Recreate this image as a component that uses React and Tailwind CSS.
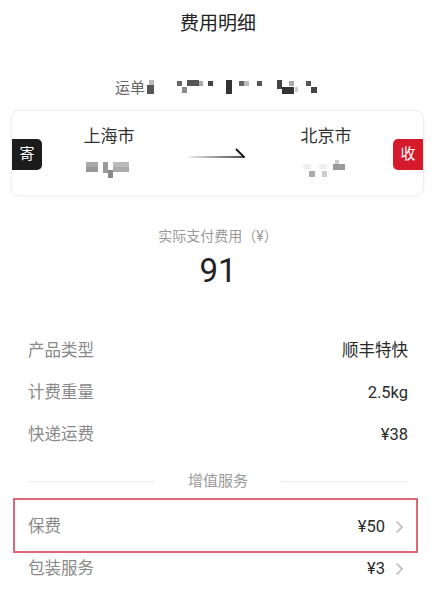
import React from "react";

const font = "font-['Roboto','Noto_Sans_CJK_SC',sans-serif]";

const waybillBlocks = [
  [2, 7, 7, 9, "#555"],
  [4, 2, 5, 5, "#bbb"],
  [32, 3, 5, 5, "#666"],
  [37, 9, 5, 6, "#888"],
  [42, 2, 12, 6, "#555"],
  [54, 3, 4, 5, "#aaa"],
  [63, 3, 5, 5, "#444"],
  [81, 2, 6, 14, "#333"],
  [94, 3, 5, 5, "#666"],
  [99, 3, 5, 5, "#bbb"],
  [112, 3, 5, 5, "#555"],
  [132, 2, 5, 9, "#444"],
  [137, 9, 12, 7, "#333"],
  [144, 3, 5, 5, "#aaa"],
  [150, 9, 3, 5, "#ccc"],
  [161, 3, 5, 5, "#555"],
  [166, 9, 6, 6, "#444"],
];

const Mosaic = ({ blocks, width, height }) => (
  <svg width={width} height={height} viewBox={`0 0 ${width} ${height}`}>
    {blocks.map(([x, y, w, h, c], i) => (
      <rect key={i} x={x} y={y} width={w} height={h} fill={c} />
    ))}
  </svg>
);

const Chevron = () => (
  <svg width="9" height="14" viewBox="0 0 9 14" className="ml-[10px]">
    <polyline
      points="1.5,1.5 7,7 1.5,12.5"
      fill="none"
      stroke="#b8b8b8"
      strokeWidth="1.5"
    />
  </svg>
);

const Row = ({ label, value, arrow }) => (
  <div className="h-[42px] flex items-center justify-between px-[28px]">
    <span className="text-[16.5px] text-[#8a8a8a]">{label}</span>
    <span className={`flex items-center text-[16.5px] text-[#2a2a2a] ${arrow ? "mr-[4px]" : ""}`}>
      {value}
      {arrow && <Chevron />}
    </span>
  </div>
);

export default function App() {
  return (
    <div className={`w-[436px] h-[600px] bg-white overflow-hidden ${font}`}>
      {/* header */}
      <div className="h-[48px] flex items-center justify-center text-[19px] text-[#222]">
        费用明细
      </div>

      {/* waybill */}
      <div className="mt-[30px] h-[20px] flex items-center justify-center">
        <span className="text-[15px] text-[#666] leading-none">运单</span>
        <Mosaic blocks={waybillBlocks} width={176} height={20} />
      </div>

      {/* route card */}
      <div className="mt-[12px] ml-[11px] mr-[12px] h-[86px] rounded-[8px] border border-[#eeeeee] shadow-[0_1px_4px_rgba(0,0,0,0.04)] flex items-center">
        <div className="w-[30px] h-[31px] mt-[3px] bg-[#1c1c1c] rounded-r-[5px] flex items-center justify-center text-white text-[15px]">
          寄
        </div>
        <div className="flex-1 flex items-start justify-between px-[32px] pt-[2px] pb-[6px]">
          <div className="w-[70px] flex flex-col items-center">
            <span className="text-[17px] leading-[24px] text-[#333]">上海市</span>
            <div className="mt-[12px]">
              <Mosaic
                width={46}
                height={18}
                blocks={[
                  [0, 2, 12, 5, "#aaa"],
                  [0, 7, 12, 5, "#999"],
                  [17, 2, 5, 11, "#999"],
                  [22, 10, 5, 8, "#888"],
                  [27, 2, 16, 5, "#bbb"],
                  [27, 7, 16, 5, "#aaa"],
                ]}
              />
            </div>
          </div>
          <div className="self-center mt-[6px]">
            <svg width="58" height="14" viewBox="0 0 58 14">
              <defs>
                <linearGradient
                  id="arrowGrad"
                  gradientUnits="userSpaceOnUse"
                  x1="0"
                  y1="10"
                  x2="56"
                  y2="10"
                >
                  <stop offset="0" stopColor="#000" stopOpacity="0.1" />
                  <stop offset="0.5" stopColor="#000" stopOpacity="0.55" />
                  <stop offset="1" stopColor="#111" stopOpacity="1" />
                </linearGradient>
              </defs>
              <line x1="0" y1="10" x2="56" y2="10" stroke="url(#arrowGrad)" strokeWidth="1.6" />
              <line x1="55" y1="10" x2="47" y2="2" stroke="#111" strokeWidth="1.8" />
            </svg>
          </div>
          <div className="w-[70px] flex flex-col items-center">
            <span className="text-[17px] leading-[24px] text-[#333]">北京市</span>
            <div className="mt-[12px]">
              <Mosaic
                width={46}
                height={18}
                blocks={[
                  [0, 4, 8, 5, "#eee"],
                  [6, 11, 6, 6, "#aaa"],
                  [16, 4, 8, 5, "#eee"],
                  [19, 11, 5, 6, "#ccc"],
                  [32, 0, 4, 4, "#ccc"],
                  [30, 4, 12, 6, "#999"],
                ]}
              />
            </div>
          </div>
        </div>
        <div className="w-[30px] h-[31px] mt-[3px] bg-[#d51a2c] rounded-l-[5px] flex items-center justify-center text-white text-[15px]">
          收
        </div>
      </div>

      {/* amount */}
      <div className="mt-[30px] flex flex-col items-center">
        <span className="text-[14px] leading-[20px] text-[#9a9a9a]">实际支付费用（¥）</span>
        <span className="mt-[5px] text-[33px] leading-[40px] text-[#222]">91</span>
      </div>

      {/* details */}
      <div className="mt-[39px]">
        <Row label="产品类型" value="顺丰特快" />
        <Row label="计费重量" value="2.5kg" />
        <Row label="快递运费" value="¥38" />

        <div className="h-[50px] flex items-center px-[28px]">
          <div className="flex-1 h-px bg-[#ececec]" />
          <span className="px-[33px] text-[15px] text-[#9a9a9a]">增值服务</span>
          <div className="flex-1 h-px bg-[#ececec]" />
        </div>

        <div className="relative">
          <Row label="保费" value="¥50" arrow />
          <div className="absolute left-[13px] right-[18px] top-[-8px] bottom-[-5px] border-2 border-[#dc6a72] pointer-events-none" />
        </div>
        <Row label="包装服务" value="¥3" arrow />
      </div>
    </div>
  );
}
